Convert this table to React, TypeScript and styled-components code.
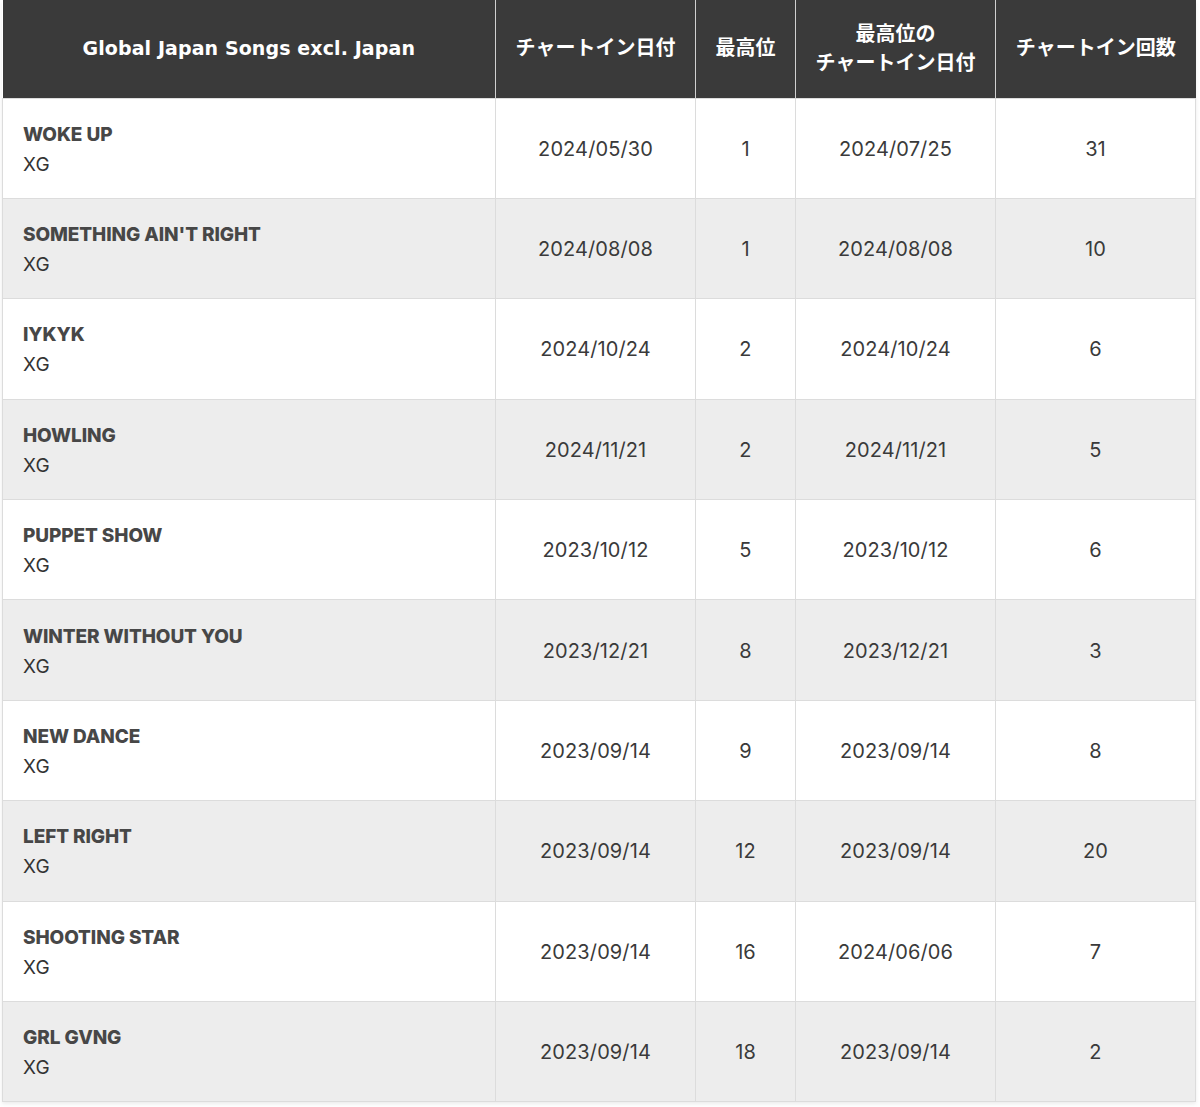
import React from "react";
import styled, { createGlobalStyle } from "styled-components";

const GlobalStyle = createGlobalStyle`
  html, body {
    margin: 0;
    padding: 0;
    background: #ffffff;
  }
  body {
    font-family: Inter, "Noto Sans", "Noto Sans CJK JP", sans-serif;
  }
`;

const Wrapper = styled.div`
  padding: 0 4px 5px 2px;
  background: #ffffff;
`;

const Table = styled.table`
  width: 100%;
  border-collapse: collapse;
  table-layout: fixed;
  box-shadow: 0 2px 4px rgba(0, 0, 0, 0.08);
`;

const HeadCell = styled.th<{ $width: number }>`
  width: ${({ $width }) => $width}px;
  height: 98px;
  padding: 0 4px;
  box-sizing: border-box;
  background: #3a3a3a;
  color: #ffffff;
  font-family: "DejaVu Sans", "Noto Sans CJK JP", sans-serif;
  font-size: 20px;
  font-weight: 700;
  line-height: 29px;
  text-align: center;
  vertical-align: middle;
  border-left: 1px solid #cfcfcf;
  &:first-child {
    border-left: none;
    font-size: 19px;
    letter-spacing: 0.1px;
  }
`;

const Row = styled.tr<{ $striped: boolean }>`
  background: ${({ $striped }) => ($striped ? "#ededed" : "#ffffff")};
`;

const Cell = styled.td`
  height: 100.4px;
  box-sizing: border-box;
  border: 1px solid #dcdcdc;
  text-align: center;
  vertical-align: middle;
  font-size: 20px;
  color: #3a3a3a;
  letter-spacing: 0.1px;
  padding-top: 2px;
`;

const SongCell = styled(Cell)`
  text-align: left;
  padding: 3px 20px 0;
`;

const Title = styled.div`
  font-size: 19px;
  font-weight: 800;
  color: #474747;
  line-height: 30px;
  letter-spacing: -0.1px;
`;

const Artist = styled.div`
  font-size: 19px;
  color: #333333;
  line-height: 30px;
`;

type Song = {
  title: string;
  chartIn: string;
  peak: number;
  peakDate: string;
  weeks: number;
};

const songs: Song[] = [
  { title: "WOKE UP", chartIn: "2024/05/30", peak: 1, peakDate: "2024/07/25", weeks: 31 },
  { title: "SOMETHING AIN'T RIGHT", chartIn: "2024/08/08", peak: 1, peakDate: "2024/08/08", weeks: 10 },
  { title: "IYKYK", chartIn: "2024/10/24", peak: 2, peakDate: "2024/10/24", weeks: 6 },
  { title: "HOWLING", chartIn: "2024/11/21", peak: 2, peakDate: "2024/11/21", weeks: 5 },
  { title: "PUPPET SHOW", chartIn: "2023/10/12", peak: 5, peakDate: "2023/10/12", weeks: 6 },
  { title: "WINTER WITHOUT YOU", chartIn: "2023/12/21", peak: 8, peakDate: "2023/12/21", weeks: 3 },
  { title: "NEW DANCE", chartIn: "2023/09/14", peak: 9, peakDate: "2023/09/14", weeks: 8 },
  { title: "LEFT RIGHT", chartIn: "2023/09/14", peak: 12, peakDate: "2023/09/14", weeks: 20 },
  { title: "SHOOTING STAR", chartIn: "2023/09/14", peak: 16, peakDate: "2024/06/06", weeks: 7 },
  { title: "GRL GVNG", chartIn: "2023/09/14", peak: 18, peakDate: "2023/09/14", weeks: 2 },
];

const App: React.FC = () => {
  return (
    <>
      <GlobalStyle />
      <Wrapper>
        <Table>
          <thead>
            <tr>
              <HeadCell $width={493}>Global Japan Songs excl. Japan</HeadCell>
              <HeadCell $width={200}>チャートイン日付</HeadCell>
              <HeadCell $width={100}>最高位</HeadCell>
              <HeadCell $width={200}>
                最高位の
                <br />
                チャートイン日付
              </HeadCell>
              <HeadCell $width={200}>チャートイン回数</HeadCell>
            </tr>
          </thead>
          <tbody>
            {songs.map((song, i) => (
              <Row key={song.title} $striped={i % 2 === 1}>
                <SongCell>
                  <Title>{song.title}</Title>
                  <Artist>XG</Artist>
                </SongCell>
                <Cell>{song.chartIn}</Cell>
                <Cell>{song.peak}</Cell>
                <Cell>{song.peakDate}</Cell>
                <Cell>{song.weeks}</Cell>
              </Row>
            ))}
          </tbody>
        </Table>
      </Wrapper>
    </>
  );
};

export default App;
